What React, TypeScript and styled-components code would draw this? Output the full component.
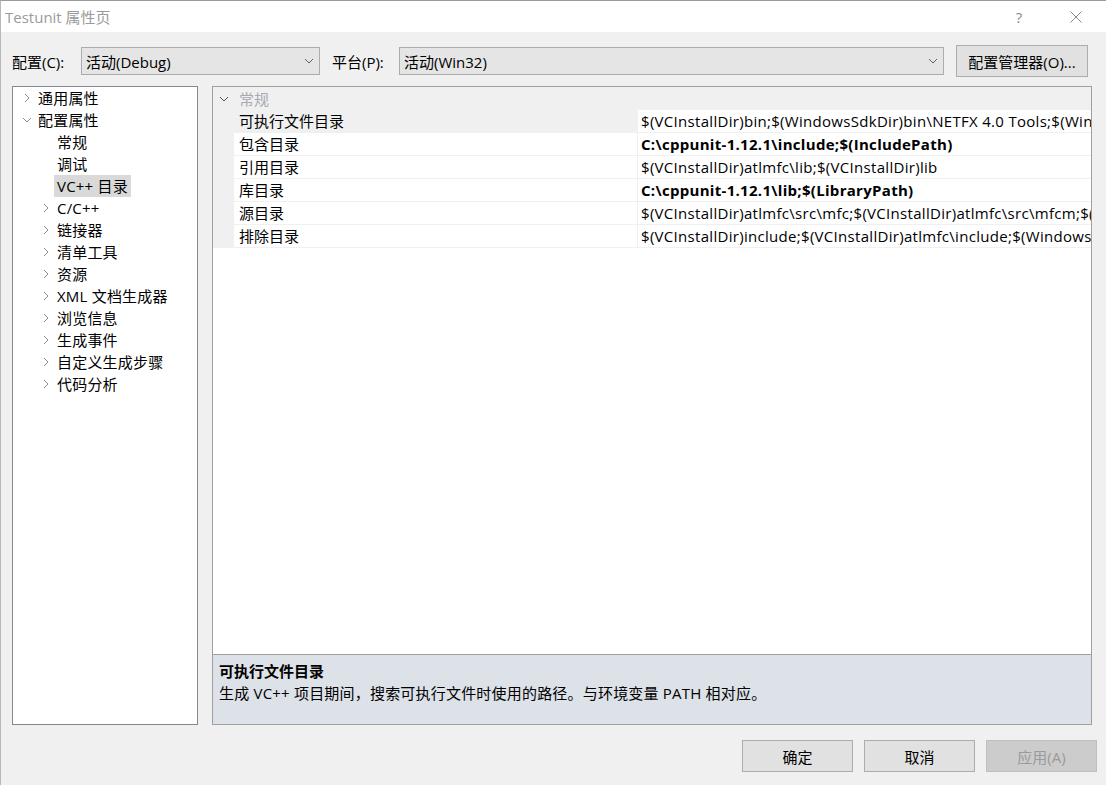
import React from "react";
import styled, { createGlobalStyle } from "styled-components";

const GlobalStyle = createGlobalStyle`
  html, body {
    margin: 0;
    padding: 0;
    background: #f0f0f0;
  }
  body {
    font-family: "Open Sans", "Noto Sans CJK SC", sans-serif;
    font-size: 15px;
    color: #000;
  }
`;

const Window = styled.div`
  width: 1106px;
  height: 785px;
  display: flex;
  flex-direction: column;
  background: #f0f0f0;
  border-top: 1px solid #9a9a9a;
  border-left: 1px solid #b8b8b8;
  box-sizing: border-box;
  overflow: hidden;
`;

const TitleBar = styled.div`
  height: 31px;
  flex: none;
  display: flex;
  align-items: center;
  background: #fff;
  padding-left: 4px;
`;

const Title = styled.div`
  color: #9b9b9b;
  font-size: 15px;
`;

const TitleButtons = styled.div`
  margin-left: auto;
  display: flex;
  align-items: center;
  gap: 11px;
  padding-right: 7px;
`;

const TitleButton = styled.div`
  width: 46px;
  height: 31px;
  display: flex;
  align-items: center;
  justify-content: center;
  color: #8a8a8a;
  font-size: 15px;
`;

const Toolbar = styled.div`
  display: flex;
  align-items: center;
  height: 32px;
  margin-top: 13px;
  padding-left: 11px;
`;

const Label = styled.div<{ $w: number; $gap?: number }>`
  width: ${(p) => p.$w}px;
  margin-left: ${(p) => p.$gap ?? 0}px;
  flex: none;
`;

const Select = styled.div<{ $w: number }>`
  width: ${(p) => p.$w}px;
  height: 28px;
  box-sizing: border-box;
  flex: none;
  display: flex;
  align-items: center;
  padding: 0 5px 0 4px;
  background: #e5e5e5;
  border: 1px solid #acacac;
`;

const SelectText = styled.span`
  flex: 1;
`;

const PushButton = styled.div<{ $w: number; $gap?: number; $disabled?: boolean }>`
  width: ${(p) => p.$w}px;
  margin-left: ${(p) => p.$gap ?? 0}px;
  height: 32px;
  box-sizing: border-box;
  flex: none;
  display: flex;
  align-items: center;
  justify-content: center;
  background: ${(p) => (p.$disabled ? "#cccccc" : "#e1e1e1")};
  border: 1px solid ${(p) => (p.$disabled ? "#bfbfbf" : "#adadad")};
  color: ${(p) => (p.$disabled ? "#9a9a9a" : "#000")};
`;

const Main = styled.div`
  display: flex;
  gap: 14px;
  margin-top: 9px;
  padding-left: 11px;
  height: 639px;
`;

const TreePanel = styled.div`
  width: 186px;
  box-sizing: border-box;
  background: #fff;
  border: 1px solid #828790;
`;

const TreeRow = styled.div<{ $level: number }>`
  height: 22px;
  display: flex;
  align-items: center;
  padding-left: ${(p) => 8 + p.$level * 19}px;
`;

const ArrowBox = styled.div`
  width: 12px;
  height: 22px;
  margin-right: 5px;
  display: flex;
  align-items: center;
  justify-content: center;
  flex: none;
`;

const TreeLabel = styled.span<{ $selected?: boolean }>`
  line-height: 22px;
  padding: 0 3px;
  margin-left: -3px;
  background: ${(p) => (p.$selected ? "#d9d9d9" : "transparent")};
  white-space: nowrap;
  letter-spacing: 0.2px;
`;

const GridPanel = styled.div`
  width: 880px;
  box-sizing: border-box;
  border: 1px solid #a0a0a0;
  display: flex;
  flex-direction: column;
`;

const PropList = styled.div`
  flex: 1;
  background: #fff;
  overflow: hidden;
`;

const CategoryRow = styled.div`
  height: 23px;
  display: flex;
  align-items: center;
  background: #f0f0f0;
`;

const Gutter = styled.div`
  width: 21px;
  height: 100%;
  flex: none;
  display: flex;
  align-items: center;
  justify-content: center;
  background: #f0f0f0;
`;

const CategoryText = styled.span`
  padding-left: 5px;
  color: #a6abb3;
`;

const PropRow = styled.div`
  height: 23px;
  display: flex;
`;

const NameCell = styled.div<{ $selected?: boolean }>`
  width: 404px;
  flex: none;
  box-sizing: border-box;
  padding-left: 5px;
  line-height: 22px;
  border-bottom: 1px solid #f0f0f0;
  border-right: 1px solid #f0f0f0;
  background: ${(p) => (p.$selected ? "#f0f0f0" : "#fff")};
  white-space: nowrap;
`;

const ValueCell = styled.div<{ $bold?: boolean }>`
  flex: 1;
  min-width: 0;
  box-sizing: border-box;
  padding-left: 3px;
  line-height: 22px;
  border-bottom: 1px solid #f0f0f0;
  white-space: nowrap;
  overflow: hidden;
  letter-spacing: 0.3px;
  font-weight: ${(p) => (p.$bold ? 700 : 400)};
`;

const DescPanel = styled.div`
  height: 70px;
  flex: none;
  box-sizing: border-box;
  background: #dde1e8;
  border-top: 1px solid #a0a0a0;
  padding: 5px 0 0 6px;
`;

const DescTitle = styled.div`
  font-weight: 700;
  line-height: 22px;
`;

const DescText = styled.div`
  line-height: 22px;
  letter-spacing: 0.2px;
`;

const Footer = styled.div`
  display: flex;
  gap: 11px;
  margin-top: 15px;
  padding-left: 741px;
`;

const Chevron = ({ dir, color = "#8c8c8c" }: { dir: "right" | "down"; color?: string }) =>
  dir === "right" ? (
    <svg width="6" height="10" viewBox="0 0 6 10">
      <path d="M1 1 L5 5 L1 9" fill="none" stroke={color} strokeWidth="1" />
    </svg>
  ) : (
    <svg width="10" height="6" viewBox="0 0 10 6">
      <path d="M1 1 L5 5 L9 1" fill="none" stroke={color} strokeWidth="1" />
    </svg>
  );

const treeItems: { label: string; level: number; arrow?: "right" | "down"; selected?: boolean }[] = [
  { label: "通用属性", level: 0, arrow: "right" },
  { label: "配置属性", level: 0, arrow: "down" },
  { label: "常规", level: 1 },
  { label: "调试", level: 1 },
  { label: "VC++ 目录", level: 1, selected: true },
  { label: "C/C++", level: 1, arrow: "right" },
  { label: "链接器", level: 1, arrow: "right" },
  { label: "清单工具", level: 1, arrow: "right" },
  { label: "资源", level: 1, arrow: "right" },
  { label: "XML 文档生成器", level: 1, arrow: "right" },
  { label: "浏览信息", level: 1, arrow: "right" },
  { label: "生成事件", level: 1, arrow: "right" },
  { label: "自定义生成步骤", level: 1, arrow: "right" },
  { label: "代码分析", level: 1, arrow: "right" },
];

// values are wider than the column, the grid clips them at its right edge
const props: { name: string; value: string; bold?: boolean; selected?: boolean }[] = [
  {
    name: "可执行文件目录",
    value: "$(VCInstallDir)bin;$(WindowsSdkDir)bin\\NETFX 4.0 Tools;$(WindowsSdkDir)bin",
    selected: true,
  },
  { name: "包含目录", value: "C:\\cppunit-1.12.1\\include;$(IncludePath)", bold: true },
  { name: "引用目录", value: "$(VCInstallDir)atlmfc\\lib;$(VCInstallDir)lib" },
  { name: "库目录", value: "C:\\cppunit-1.12.1\\lib;$(LibraryPath)", bold: true },
  {
    name: "源目录",
    value: "$(VCInstallDir)atlmfc\\src\\mfc;$(VCInstallDir)atlmfc\\src\\mfcm;$(VCInstallDir)atlmfc\\src\\atl",
  },
  {
    name: "排除目录",
    value: "$(VCInstallDir)include;$(VCInstallDir)atlmfc\\include;$(WindowsSdkDir)include",
  },
];

export default function App() {
  return (
    <>
      <GlobalStyle />
      <Window>
        <TitleBar>
          <Title>Testunit 属性页</Title>
          <TitleButtons>
            <TitleButton>?</TitleButton>
            <TitleButton>
              <svg width="12" height="12" viewBox="0 0 12 12">
                <path d="M0.5 0.5 L11.5 11.5 M11.5 0.5 L0.5 11.5" stroke="#8a8a8a" strokeWidth="1" />
              </svg>
            </TitleButton>
          </TitleButtons>
        </TitleBar>

        <Toolbar>
          <Label $w={69}>配置(C):</Label>
          <Select $w={239}>
            <SelectText>活动(Debug)</SelectText>
            <Chevron dir="down" color="#606060" />
          </Select>
          <Label $w={67} $gap={12}>
            平台(P):
          </Label>
          <Select $w={545}>
            <SelectText>活动(Win32)</SelectText>
            <Chevron dir="down" color="#606060" />
          </Select>
          <PushButton $w={132} $gap={12}>
            配置管理器(O)...
          </PushButton>
        </Toolbar>

        <Main>
          <TreePanel>
            {treeItems.map((it) => (
              <TreeRow key={it.label} $level={it.level}>
                <ArrowBox>{it.arrow && <Chevron dir={it.arrow} />}</ArrowBox>
                <TreeLabel $selected={it.selected}>{it.label}</TreeLabel>
              </TreeRow>
            ))}
          </TreePanel>

          <GridPanel>
            <PropList>
              <CategoryRow>
                <Gutter>
                  <Chevron dir="down" color="#555" />
                </Gutter>
                <CategoryText>常规</CategoryText>
              </CategoryRow>
              {props.map((p) => (
                <PropRow key={p.name}>
                  <Gutter />
                  <NameCell $selected={p.selected}>{p.name}</NameCell>
                  <ValueCell $bold={p.bold}>{p.value}</ValueCell>
                </PropRow>
              ))}
            </PropList>
            <DescPanel>
              <DescTitle>可执行文件目录</DescTitle>
              <DescText>生成 VC++ 项目期间，搜索可执行文件时使用的路径。与环境变量 PATH 相对应。</DescText>
            </DescPanel>
          </GridPanel>
        </Main>

        <Footer>
          <PushButton $w={111}>确定</PushButton>
          <PushButton $w={111}>取消</PushButton>
          <PushButton $w={111} $disabled>
            应用(A)
          </PushButton>
        </Footer>
      </Window>
    </>
  );
}
